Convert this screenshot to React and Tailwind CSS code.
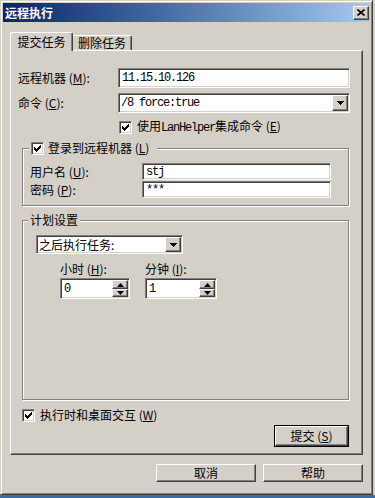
import React from "react";

const raised =
  "border border-t-white border-l-white border-r-[#404040] border-b-[#404040] shadow-[inset_-1px_-1px_0_#808080]";
const sunken =
  "border border-t-[#808080] border-l-[#808080] border-r-white border-b-white shadow-[inset_1px_1px_0_#404040,inset_-1px_-1px_0_#d4d0c8]";
const etched = "border border-[#808080] shadow-[inset_1px_1px_0_#fff,1px_1px_0_#fff]";
const mono = "font-['Liberation_Mono',monospace] text-[12px] tracking-[-1.2px]";

function Check() {
  return (
    <span className={`inline-flex shrink-0 w-[13px] h-[13px] bg-white ${sunken} items-center justify-center`}>
      <svg width="7" height="7" viewBox="0 0 7 7" shapeRendering="crispEdges">
        <rect x="6" y="0" width="1" height="3" fill="#000" />
        <rect x="5" y="1" width="1" height="3" fill="#000" />
        <rect x="4" y="2" width="1" height="3" fill="#000" />
        <rect x="3" y="3" width="1" height="3" fill="#000" />
        <rect x="2" y="4" width="1" height="3" fill="#000" />
        <rect x="1" y="3" width="1" height="3" fill="#000" />
        <rect x="0" y="2" width="1" height="3" fill="#000" />
      </svg>
    </span>
  );
}

function DownArrow() {
  return (
    <svg width="7" height="4" viewBox="0 0 7 4" shapeRendering="crispEdges">
      <path d="M0 0H7L3.5 4Z" fill="#000" />
    </svg>
  );
}

function DropBtn() {
  return (
    <span className={`w-[16px] h-full bg-[#d4d0c8] ${raised} flex items-center justify-center`}>
      <DownArrow />
    </span>
  );
}

function Spin({ value, width }) {
  return (
    <div className={`${width} h-[21px] bg-white ${sunken} p-[1px] flex items-stretch`}>
      <span className={`flex-1 flex items-center pl-[2px] ${mono}`}>{value}</span>
      <span className="w-[16px] flex flex-col">
        <span className={`h-[9px] bg-[#d4d0c8] ${raised} flex items-end justify-center pb-[1px]`}>
          <svg width="7" height="4" viewBox="0 0 7 4">
            <path d="M3.5 0L7 4H0Z" fill="#000" />
          </svg>
        </span>
        <span className={`flex-1 bg-[#d4d0c8] ${raised} flex items-start justify-center pt-[1px]`}>
          <svg width="7" height="4" viewBox="0 0 7 4">
            <path d="M0 0H7L3.5 4Z" fill="#000" />
          </svg>
        </span>
      </span>
    </div>
  );
}

export default function App() {
  return (
    <div className="w-[375px] h-[498px] bg-[#d4d0c8] font-['Noto_Sans_CJK_SC',sans-serif] text-[12px] leading-[14px] text-black overflow-hidden flex flex-col">
      <div className="flex h-[495px]">
        <div className="w-[373px] h-[495px] flex flex-col border border-t-[#d4d0c8] border-l-[#d4d0c8] border-r-[#404040] border-b-[#404040] shadow-[inset_1px_1px_0_#fff,inset_-1px_-1px_0_#808080] p-[2px]">
          {/* Title bar */}
          <div className="h-[19px] flex items-center justify-between bg-linear-to-r from-[#0a246a] to-[#a6caf0] pl-[2px] pr-[1px]">
            <span className="text-white font-bold text-[12px] leading-none">远程执行</span>
            <span className={`w-[16px] h-[14px] bg-[#d4d0c8] ${raised} flex items-center justify-center`}>
              <svg width="8" height="7" viewBox="0 0 8 7">
                <path d="M0.5 0.5L7.5 6.5M7.5 0.5L0.5 6.5" stroke="#000" strokeWidth="1.6" />
              </svg>
            </span>
          </div>

          <div className="px-[7px] pt-[10px] flex flex-col">
            {/* Tabs */}
            <div className="h-[18px] flex items-end">
              <div className="relative z-10 -mb-px w-[63px] h-[19px] bg-[#d4d0c8] border-l border-t border-r border-l-white border-t-white border-r-[#404040] rounded-t-[3px] shadow-[inset_-1px_0_0_#808080] flex items-center justify-center">
                提交任务
              </div>
              <div className="w-[59px] h-[15px] bg-[#d4d0c8] border-t border-r border-t-white border-r-[#404040] rounded-tr-[2px] shadow-[inset_-1px_0_0_#808080] flex items-center justify-center">
                删除任务
              </div>
            </div>

            {/* Tab page */}
            <div className="w-[353px] h-[405px] border border-t-white border-l-white border-r-[#404040] border-b-[#404040] shadow-[inset_-1px_-1px_0_#808080] px-[7px] flex flex-col">
              <div className="mt-[17px] h-[20px] flex items-center">
                <span className="w-[100px]">
                  远程机器 (<u>M</u>):
                </span>
                <div className={`w-[232px] h-[20px] bg-white ${sunken} flex items-center pl-[3px] ${mono}`}>
                  11.15.10.126
                </div>
              </div>

              <div className="mt-[5px] h-[20px] flex items-center">
                <span className="w-[100px]">
                  命令 (<u>C</u>):
                </span>
                <div className={`w-[232px] h-[20px] bg-white ${sunken} p-[1px] flex items-stretch`}>
                  <span className={`flex-1 flex items-center pl-[1px] ${mono}`}>/8 force:true</span>
                  <DropBtn />
                </div>
              </div>

              <div className="mt-[6px] ml-[101px] flex items-center gap-[5px]">
                <Check />
                <span>
                  使用<span className={mono}>LanHelper</span>集成命令 (<u>E</u>)
                </span>
              </div>

              {/* Group 1 */}
              <div className={`relative mt-[13px] ml-[4px] w-[327px] h-[58px] ${etched} pl-[7px] pt-[14px] flex flex-col`}>
                <div className="absolute left-[6px] -top-[8px] h-[14px] bg-[#d4d0c8] pl-[2px] pr-[8px] flex items-center gap-[4px]">
                  <Check />
                  <span>
                    登录到远程机器 (<u>L</u>)
                  </span>
                </div>
                <div className="h-[17px] flex items-center">
                  <span className="w-[112px]">
                    用户名 (<u>U</u>):
                  </span>
                  <div className={`w-[189px] h-[17px] bg-white ${sunken} flex items-center pl-[3px] ${mono}`}>stj</div>
                </div>
                <div className="mt-[1px] h-[17px] flex items-center">
                  <span className="w-[112px]">
                    密码 (<u>P</u>):
                  </span>
                  <div className={`w-[189px] h-[17px] bg-white ${sunken} flex items-center pl-[3px] ${mono}`}>***</div>
                </div>
              </div>

              {/* Group 2 */}
              <div className={`relative mt-[14px] ml-[4px] w-[327px] h-[180px] ${etched} pl-[13px] pt-[14px] flex flex-col`}>
                <div className="absolute left-[5px] -top-[8px] h-[14px] bg-[#d4d0c8] px-[2px] flex items-center">
                  计划设置
                </div>
                <div className={`w-[147px] h-[19px] bg-white ${sunken} p-[1px] flex items-stretch`}>
                  <span className="flex-1 flex items-center pl-[1px]">之后执行任务:</span>
                  <DropBtn />
                </div>
                <div className="ml-[24px] mt-[9px] flex gap-[15px]">
                  <div className="flex flex-col w-[70px]">
                    <span className="h-[12px] leading-[12px]">
                      小时 (<u>H</u>):
                    </span>
                    <div className="mt-[3px]">
                      <Spin value="0" width="w-[70px]" />
                    </div>
                  </div>
                  <div className="flex flex-col w-[72px]">
                    <span className="h-[12px] leading-[12px]">
                      分钟 (<u>I</u>):
                    </span>
                    <div className="mt-[3px]">
                      <Spin value="1" width="w-[72px]" />
                    </div>
                  </div>
                </div>
              </div>

              <div className="mt-[8px] ml-[4px] flex items-center gap-[5px]">
                <Check />
                <span>
                  执行时和桌面交互 (<u>W</u>)
                </span>
              </div>

              <div className="mt-[3px] self-end mr-[6px] w-[75px] h-[22px] border border-black">
                <div className={`w-full h-full bg-[#d4d0c8] ${raised} flex items-center justify-center`}>
                  提交 (<u>S</u>)
                </div>
              </div>
            </div>

            {/* Bottom buttons */}
            <div className="mt-[9px] flex justify-end gap-[7px]">
              <div className={`w-[100px] h-[18px] bg-[#d4d0c8] ${raised} flex items-center justify-center`}>取消</div>
              <div className={`w-[100px] h-[18px] bg-[#d4d0c8] ${raised} flex items-center justify-center`}>帮助</div>
            </div>
          </div>
        </div>
        <div className="flex-1" />
      </div>
      <div className="h-[3px] bg-[#3a6ea5]" />
    </div>
  );
}
